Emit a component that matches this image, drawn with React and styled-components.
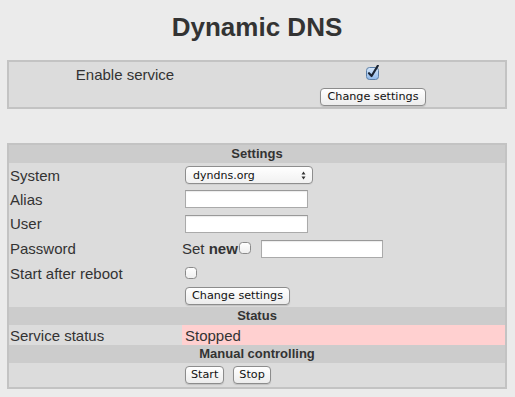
import React from "react";
import styled, { createGlobalStyle } from "styled-components";

const Global = createGlobalStyle`
  html, body {
    margin: 0;
    padding: 0;
    background: #ebebeb;
  }
  body {
    font-family: "Liberation Sans", Arial, sans-serif;
    color: #333;
  }
`;

const Page = styled.div`
  width: 515px;
  height: 397px;
  padding: 0 8px 0 7px;
  box-sizing: border-box;
  overflow: hidden;
`;

const Title = styled.h1`
  margin: 0;
  padding-top: 12px;
  height: 60px;
  box-sizing: border-box;
  text-align: center;
  font-size: 26px;
  font-weight: bold;
  color: #333;
  line-height: 30px;
`;

const Box = styled.div`
  border: 2px solid #c3c3c3;
  background: #dcdcdc;
  margin-top: ${(p) => p.top || 0}px;
`;

const EnableGrid = styled.div`
  display: grid;
  grid-template-columns: 232px 1fr;
  height: 45px;
`;

const EnableLabel = styled.div`
  text-align: center;
  font-size: 15px;
  line-height: 16px;
  padding-top: 5px;
`;

const EnableControls = styled.div`
  display: flex;
  flex-direction: column;
  align-items: center;
  padding-top: 3px;
  gap: 8px;
`;

const Header = styled.div`
  background: #cccccc;
  text-align: center;
  font-weight: bold;
  font-size: 13px;
  height: 18px;
  line-height: 18px;
`;

const Row = styled.div`
  display: grid;
  grid-template-columns: 173px 1fr;
  align-items: center;
  height: ${(p) => p.h || 24}px;
`;

const Label = styled.div`
  font-size: 15px;
  padding-left: 1px;
  line-height: 17px;
`;

const Value = styled.div`
  display: flex;
  align-items: center;
  height: 100%;
  padding-left: 3px;
  background: ${(p) => p.bg || "transparent"};
  font-size: 15px;
`;

const TextInput = styled.div`
  width: ${(p) => p.w || 123}px;
  height: 18px;
  box-sizing: border-box;
  background: #fff;
  border: 1px solid #aaa;
  border-top-color: #999;
  box-shadow: inset 0 1px 1px rgba(0, 0, 0, 0.08);
`;

const Select = styled.div`
  width: 128px;
  height: 18px;
  box-sizing: border-box;
  border: 1px solid #8e8e8e;
  border-radius: 4px;
  background: linear-gradient(#ffffff, #f1f1f1);
  box-shadow: 0 1px 0 rgba(0, 0, 0, 0.05);
  display: flex;
  align-items: center;
  justify-content: space-between;
  padding: 0 6px 0 7px;
  font-family: "DejaVu Sans", sans-serif;
  font-size: 11px;
  color: #111;
`;

const Button = styled.div`
  display: inline-flex;
  align-items: center;
  justify-content: center;
  height: 18px;
  box-sizing: border-box;
  padding: 0 ${(p) => p.px || 6}px;
  border: 1px solid #8c8c8c;
  border-radius: 4px;
  background: linear-gradient(#ffffff, #ececec);
  box-shadow: 0 1px 1px rgba(0, 0, 0, 0.12);
  font-family: "DejaVu Sans", sans-serif;
  font-size: 11.2px;
  color: #111;
  line-height: 1;
`;

const ButtonRow = styled.div`
  display: flex;
  gap: ${(p) => p.gap || 0}px;
`;

const Bold = styled.b`
  font-weight: bold;
`;

const SetNew = styled.span`
  display: inline-flex;
  align-items: center;
  gap: 1px;
  margin-left: -3px;
  margin-right: 9px;
`;

const Box13 = styled.svg`
  display: block;
  flex: none;
`;

const Check = ({ checked }) =>
  checked ? (
    <Box13 width="14" height="15" viewBox="0 0 14 15">
      <defs>
        <linearGradient id="cb" x1="0" y1="0" x2="0" y2="1">
          <stop offset="0" stopColor="#d7e8fb" />
          <stop offset="1" stopColor="#8fb8ea" />
        </linearGradient>
      </defs>
      <rect x="0.5" y="2.5" width="12" height="12" rx="3" fill="url(#cb)" stroke="#5b7ea6" />
      <path d="M3 8.2 L5.6 11 L11.8 0.8" fill="none" stroke="#1b2433" strokeWidth="2.2" strokeLinecap="round" strokeLinejoin="round" />
    </Box13>
  ) : (
    <Box13 width="13" height="13" viewBox="0 0 13 13">
      <defs>
        <linearGradient id="cu" x1="0" y1="0" x2="0" y2="1">
          <stop offset="0" stopColor="#ffffff" />
          <stop offset="1" stopColor="#eeeeee" />
        </linearGradient>
      </defs>
      <rect x="0.5" y="0.5" width="11" height="11" rx="3" fill="url(#cu)" stroke="#8a8a8a" />
    </Box13>
  );

const Arrows = () => (
  <svg width="5" height="9" viewBox="0 0 5 9">
    <path d="M2.5 0.5 L4.5 3.5 L0.5 3.5 Z M2.5 8.5 L4.5 5.5 L0.5 5.5 Z" fill="#333" />
  </svg>
);

export default function App() {
  return (
    <Page>
      <Global />
      <Title>Dynamic DNS</Title>
      <Box>
        <EnableGrid>
          <EnableLabel>Enable service</EnableLabel>
          <EnableControls>
            <Check checked />
            <Button px={6}>Change settings</Button>
          </EnableControls>
        </EnableGrid>
      </Box>

      <Box top={34}>
        <Header>Settings</Header>
        <Row>
          <Label>System</Label>
          <Value>
            <Select>
              dyndns.org
              <Arrows />
            </Select>
          </Value>
        </Row>
        <Row>
          <Label>Alias</Label>
          <Value>
            <TextInput />
          </Value>
        </Row>
        <Row h={25}>
          <Label>User</Label>
          <Value>
            <TextInput />
          </Value>
        </Row>
        <Row h={25}>
          <Label>Password</Label>
          <Value>
            <SetNew>
              <span>
                Set <Bold>new</Bold>
              </span>
              <Check />
            </SetNew>
            <TextInput w={122} />
          </Value>
        </Row>
        <Row>
          <Label>Start after reboot</Label>
          <Value>
            <Check />
          </Value>
        </Row>
        <Row h={22}>
          <div />
          <Value>
            <Button px={6}>Change settings</Button>
          </Value>
        </Row>
        <Header>Status</Header>
        <Row h={20}>
          <Label>Service status</Label>
          <Value bg="#ffd0d0">Stopped</Value>
        </Row>
        <Header>Manual controlling</Header>
        <Row h={24}>
          <div />
          <Value>
            <ButtonRow gap={9}>
              <Button px={5}>Start</Button>
              <Button px={5}>Stop</Button>
            </ButtonRow>
          </Value>
        </Row>
      </Box>
    </Page>
  );
}
